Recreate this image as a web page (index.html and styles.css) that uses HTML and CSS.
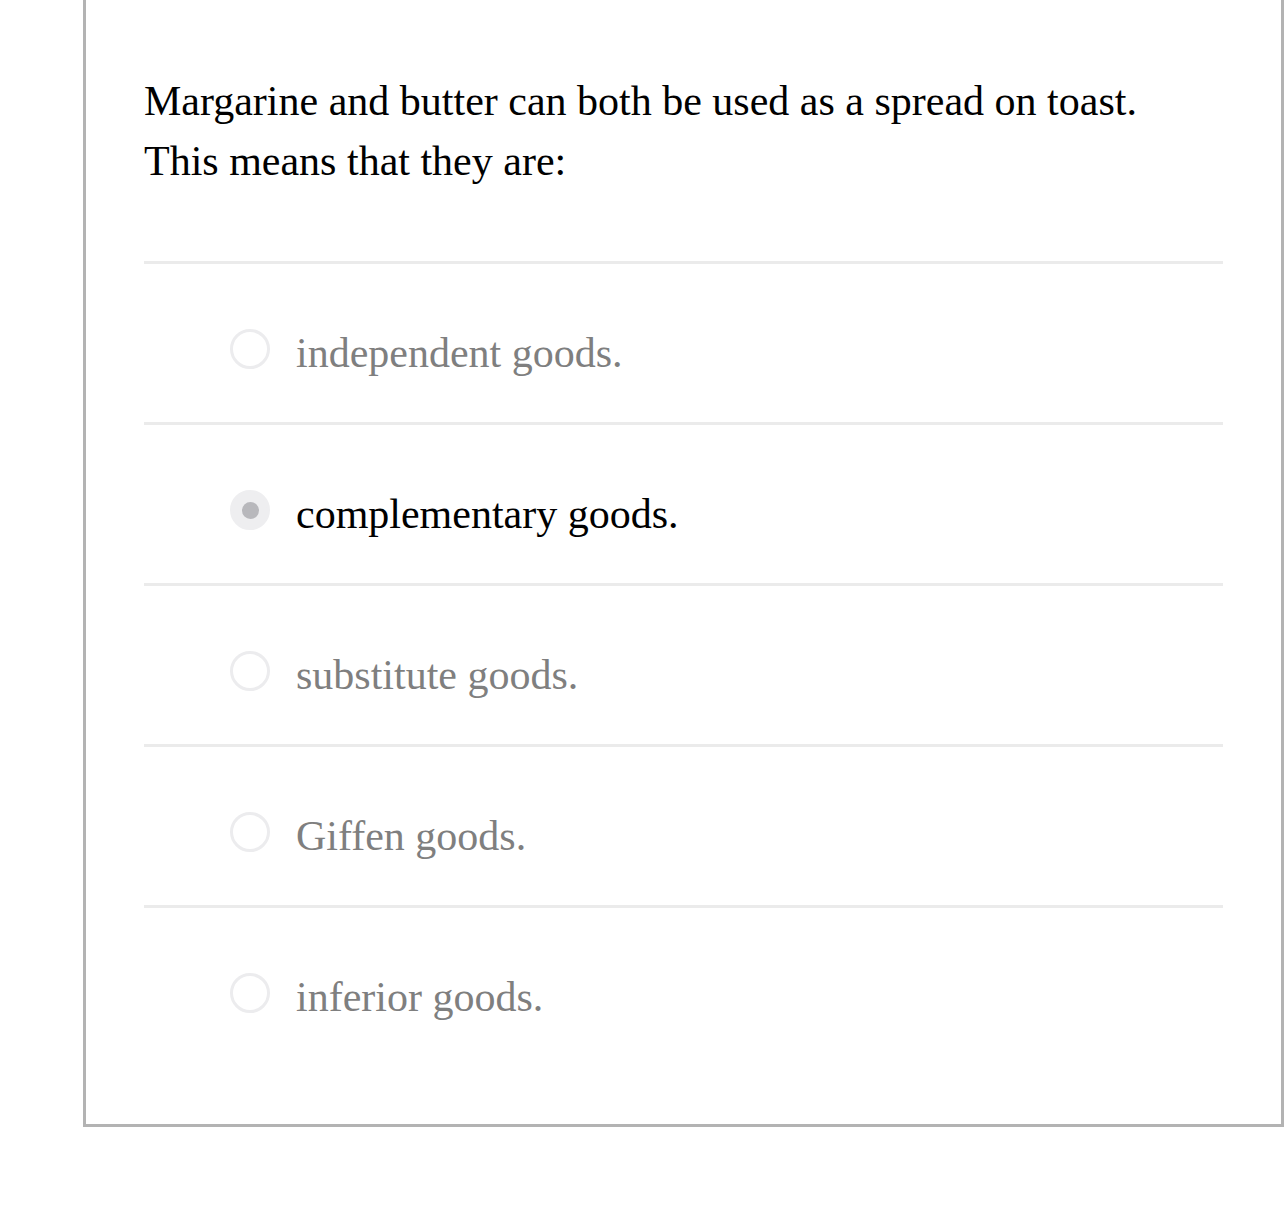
FILE: index.html
```html
<!DOCTYPE html>
<html>
<head>
<meta charset="utf-8">
<link rel="stylesheet" href="styles.css">
</head>
<body>
<div class="card">
  <p class="question">Margarine and butter can both be used as a spread on toast. This means that they are:</p>
  <ul class="options">
    <li class="option"><span class="radio"></span><span class="label">independent goods.</span></li>
    <li class="option selected"><span class="radio"></span><span class="label">complementary goods.</span></li>
    <li class="option"><span class="radio"></span><span class="label">substitute goods.</span></li>
    <li class="option"><span class="radio"></span><span class="label">Giffen goods.</span></li>
    <li class="option"><span class="radio"></span><span class="label">inferior goods.</span></li>
  </ul>
</div>
</body>
</html>
```

FILE: styles.css
```css
html, body {
  margin: 0;
  padding: 0;
  background: #ffffff;
}
body {
  font-family: "Liberation Serif", "Times New Roman", serif;
}
.card {
  margin-left: 83px;
  width: 1201px;
  box-sizing: border-box;
  border: 3px solid #b3b3b3;
  border-top: none;
  padding: 71px 58px 58px 58px;
}
.question {
  margin: 0;
  font-size: 42px;
  line-height: 60px;
  color: #000;
  width: 1020px;
}
.options {
  list-style: none;
  margin: 70px 0 0 0;
  padding: 0;
}
.option {
  display: flex;
  align-items: center;
  border-top: 3px solid #ebebeb;
  padding: 65px 0 53px 86px;
  height: 40px;
}
.radio {
  width: 40px;
  height: 40px;
  box-sizing: border-box;
  border-radius: 50%;
  border: 3px solid #ececee;
  flex: none;
  display: flex;
  align-items: center;
  justify-content: center;
}
.label {
  margin-left: 26px;
  margin-top: 8px;
  font-size: 42px;
  line-height: 40px;
  color: #7f7f7f;
  white-space: nowrap;
}
.selected .radio {
  background: #eeeef0;
  border-color: #eeeef0;
}
.selected .radio::after {
  content: "";
  width: 17px;
  height: 17px;
  border-radius: 50%;
  background: #b8b8bc;
}
.selected .label {
  color: #000;
}
```
